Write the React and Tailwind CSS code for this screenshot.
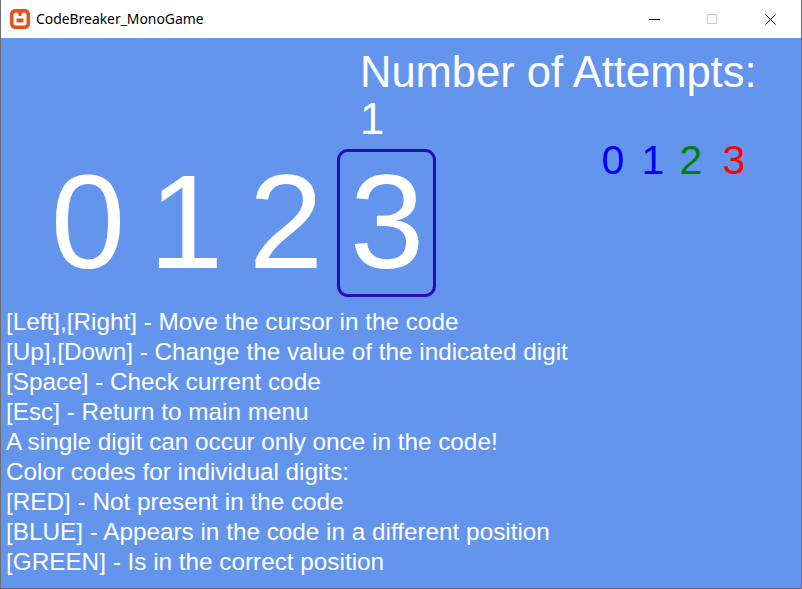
import React from 'react';

const bigDigits = [
  { v: '0', center: 87 },
  { v: '1', center: 185 },
  { v: '2', center: 285 },
  { v: '3', center: 386 },
];

const hintDigits = [
  { v: '0', center: 612, color: 'text-[#0000ff]' },
  { v: '1', center: 652, color: 'text-[#0000ff]' },
  { v: '2', center: 690, color: 'text-[#008000]' },
  { v: '3', center: 733, color: 'text-[#ff0000]' },
];

const lines = [
  '[Left],[Right] - Move the cursor in the code',
  '[Up],[Down] - Change the value of the indicated digit',
  '[Space] - Check current code',
  '[Esc] - Return to main menu',
  'A single digit can occur only once in the code!',
  'Color codes for individual digits:',
  '[RED] - Not present in the code',
  '[BLUE] - Appears in the code in a different position',
  '[GREEN] - Is in the correct position',
];

function Logo() {
  return (
    <svg width="20" height="20" viewBox="0 0 20 20">
      <rect x="0" y="0" width="20" height="20" rx="5" fill="#e8501c" />
      <path
        d="M3.5 6 a2.5 2.5 0 0 1 5 0 v1 h3 v-1 a2.5 2.5 0 0 1 5 0 V14 a2.5 2.5 0 0 1 -2.5 2.5 H6 a2.5 2.5 0 0 1 -2.5 -2.5 Z"
        fill="#fff"
      />
      <rect x="6.5" y="9.5" width="7" height="4" fill="#e8501c" />
    </svg>
  );
}

export default function App() {
  return (
    <div className="relative w-[802px] h-[589px] overflow-hidden bg-white border-x border-b border-[#6f6f6f] font-['Liberation_Sans',Arial,sans-serif]">
      {/* title bar */}
      <div className="flex h-[38px] items-center bg-white">
        <div className="ml-[9px] mr-[6px] flex items-center">
          <Logo />
        </div>
        <span className="text-[13.9px] text-black font-['Noto_Sans',sans-serif]">CodeBreaker_MonoGame</span>
        <div className="ml-auto mr-[8px] flex h-full items-center">
          <div className="flex h-full w-[46px] items-center justify-center">
            <div className="h-px w-[11px] bg-black" />
          </div>
          <div className="ml-[12px] flex h-full w-[46px] items-center justify-center">
            <div className="h-[10px] w-[10px] border border-[#c8c8c8]" />
          </div>
          <div className="ml-[12px] flex h-full w-[46px] items-center justify-center">
            <svg width="11" height="11" viewBox="0 0 11 11">
              <path d="M0.5 0.5 L10.5 10.5 M10.5 0.5 L0.5 10.5" stroke="#000" strokeWidth="1" />
            </svg>
          </div>
        </div>
      </div>

      {/* game canvas */}
      <div className="relative h-[550px] bg-[#6495ed] text-white">
        <div className="absolute left-[359px] top-[13px] text-[43.5px] leading-none">Number of Attempts:</div>
        <div className="absolute left-[359px] top-[60px] text-[43.5px] leading-none">1</div>

        {hintDigits.map((d) => (
          <div
            key={d.v}
            className={`absolute top-[102px] w-[40px] text-center text-[41px] leading-none ${d.color}`}
            style={{ left: d.center - 20 }}
          >
            {d.v}
          </div>
        ))}

        <div className="absolute left-[336px] top-[111px] h-[148px] w-[99px] rounded-[11px] border-[3px] border-[#2a0bb6]" />

        {bigDigits.map((d) => (
          <div
            key={d.v}
            className="absolute top-[117px] w-[100px] text-center text-[134px] leading-none"
            style={{ left: d.center - 50 }}
          >
            {d.v}
          </div>
        ))}

        <div className="absolute left-[5px] top-[269px] flex flex-col text-[24.3px] leading-[30px]">
          {lines.map((l) => (
            <div key={l} className="whitespace-nowrap">{l}</div>
          ))}
        </div>
      </div>
    </div>
  );
}
